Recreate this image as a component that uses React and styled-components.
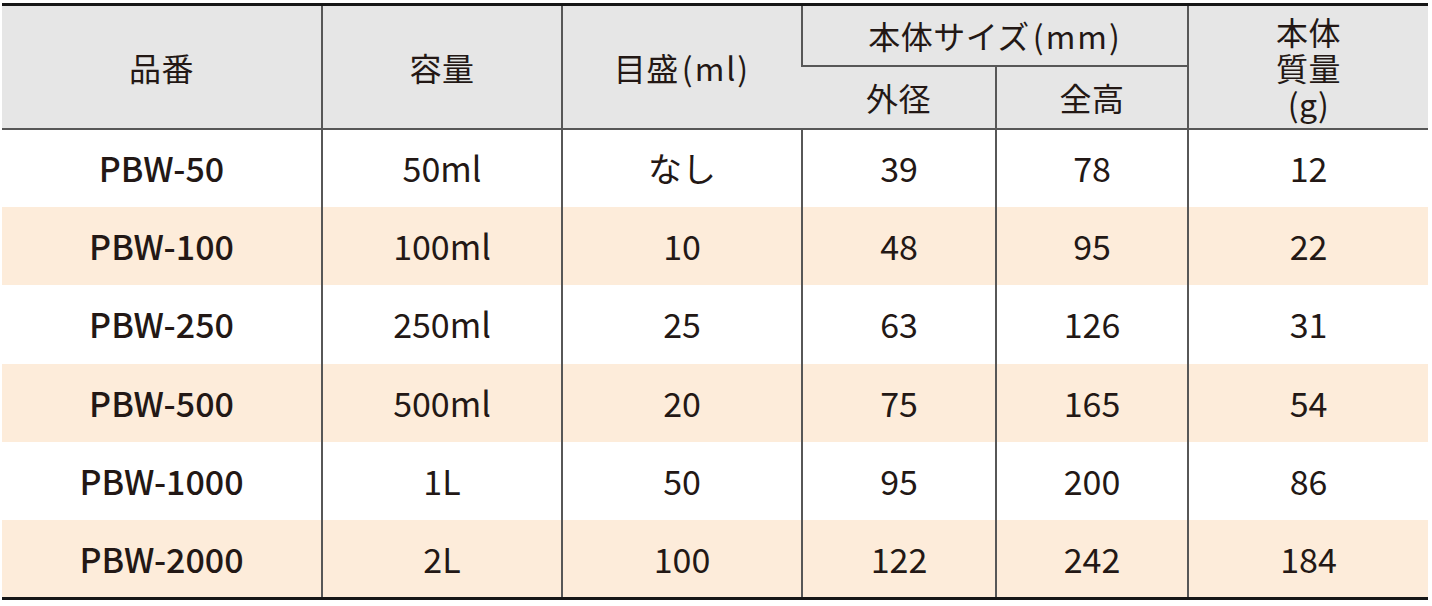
import React from 'react'
import styled, { createGlobalStyle } from 'styled-components'

const rows = [
  { code: 'PBW-50', volume: '50ml', scale: 'なし', dia: '39', height: '78', mass: '12' },
  { code: 'PBW-100', volume: '100ml', scale: '10', dia: '48', height: '95', mass: '22' },
  { code: 'PBW-250', volume: '250ml', scale: '25', dia: '63', height: '126', mass: '31' },
  { code: 'PBW-500', volume: '500ml', scale: '20', dia: '75', height: '165', mass: '54' },
  { code: 'PBW-1000', volume: '1L', scale: '50', dia: '95', height: '200', mass: '86' },
  { code: 'PBW-2000', volume: '2L', scale: '100', dia: '122', height: '242', mass: '184' },
]

const App = () => {
  return (
    <>
      <GlobalStyle />
      <Page>
        <SpecTable>
          <colgroup>
            <col style={{ width: 320 }} />
            <col style={{ width: 240 }} />
            <col style={{ width: 240 }} />
            <col style={{ width: 194 }} />
            <col style={{ width: 192 }} />
            <col style={{ width: 240 }} />
          </colgroup>
          <thead>
            <HeadRow $h={61}>
              <HeadCell rowSpan={2}>品番</HeadCell>
              <HeadCell rowSpan={2}>容量</HeadCell>
              <HeadCell rowSpan={2}>目盛<Paren>(ml)</Paren></HeadCell>
              <HeadCell colSpan={2}>本体サイズ<Paren>(mm)</Paren></HeadCell>
              <HeadCell rowSpan={2} $stack>
                <Line>本体</Line>
                <Line>質量</Line>
                <Line>(g)</Line>
              </HeadCell>
            </HeadRow>
            <HeadRow $h={63}>
              <HeadCell>外径</HeadCell>
              <HeadCell>全高</HeadCell>
            </HeadRow>
          </thead>
          <tbody>
            {rows.map((r, i) => (
              <Row key={r.code} $striped={i % 2 === 1}>
                <Cell $code>{r.code}</Cell>
                <Cell>{r.volume}</Cell>
                <Cell>{r.scale}</Cell>
                <Cell>{r.dia}</Cell>
                <Cell>{r.height}</Cell>
                <Cell>{r.mass}</Cell>
              </Row>
            ))}
          </tbody>
        </SpecTable>
      </Page>
    </>
  )
}

const GlobalStyle = createGlobalStyle`
  body { margin:0; background:#fff; font-family:"Noto Sans CJK JP", "Noto Sans", sans-serif; color:#231815; }
`;

const Page = styled.div`
  width:1432px; height:606px; padding:3px 4px 0 2px; box-sizing:border-box; background:#fff;
`;

const SpecTable = styled.table`
  width:1426px; table-layout:fixed; border-collapse:collapse;
  border-top:3px solid #161616; border-bottom:3px solid #161616;
`;

const HeadRow = styled.tr`
  height:${props => props.$h}px; background:#e6e6e6;
`;

const HeadCell = styled.th`
  font-weight:400; font-size:32px; text-align:center; vertical-align:middle; padding:0;
  line-height:40px; letter-spacing:0.5px;
  border-left:2px solid #575757; border-bottom:2px solid #575757;
  &:first-child{ border-left:none; }
`;

const Paren = styled.span`
  display:inline-block; margin-left:3px; letter-spacing:2px;
`;

const Line = styled.span`
  display:block; height:36px; line-height:36px; font-size:32px;
`;

const Row = styled.tr`
  height:78.4px; background:${props => props.$striped ? '#fdecda' : '#fff'};
`;

const Cell = styled.td`
  font-size:34px; text-align:center; vertical-align:middle; padding:0; line-height:40px;
  font-weight:${props => props.$code ? 500 : 400};
  border-left:2px solid #575757;
  &:first-child{ border-left:none; }
`;

export default App
